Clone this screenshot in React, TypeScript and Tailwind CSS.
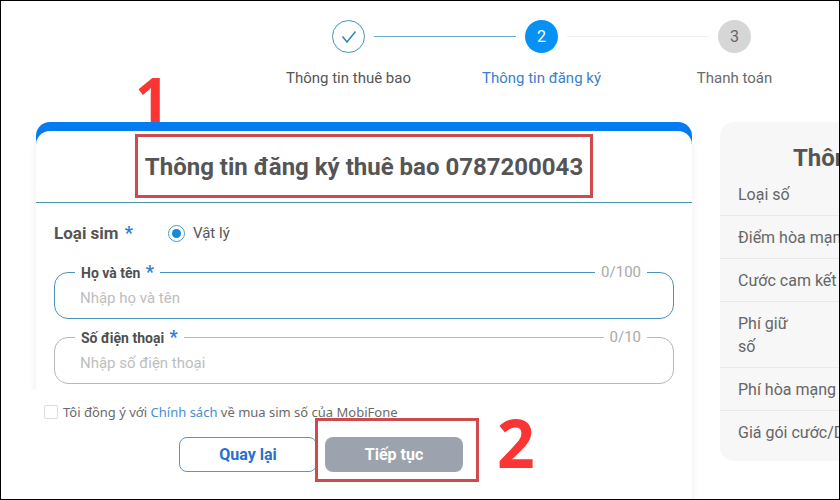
import React from 'react';

interface Step {
  id: number;
  label: string;
  status: 'done' | 'active' | 'pending';
}

const steps: Step[] = [
  { id: 1, label: 'Thông tin thuê bao', status: 'done' },
  { id: 2, label: 'Thông tin đăng ký', status: 'active' },
  { id: 3, label: 'Thanh toán', status: 'pending' },
];

const summaryRows = [
  'Loại số',
  'Điểm hòa mạng',
  'Cước cam kết',
  'Phí giữ số',
  'Phí hòa mạng',
  'Giá gói cước/Data',
];

const circleStyles = {
  done: 'border border-[#3d94b8] bg-white text-[#2f86b8]',
  active: 'bg-[#0791f5] text-white',
  pending: 'bg-[#d6d6d6] text-[#666]',
};

const labelStyles = {
  done: 'text-[#555]',
  active: 'text-[#3c80cc]',
  pending: 'text-[#6a6a6a]',
};

const CheckMark = () => (
  <svg width="16" height="14" viewBox="0 0 16 14" fill="none" stroke="currentColor" strokeWidth="1.5" aria-hidden="true">
    <path d="M1.5 6.5L6 12L14.5 1.5" />
  </svg>
);

const Stepper = () => (
  <ol className="ml-auto mr-2 flex w-[579px] max-w-full pt-[19px]">
    {steps.map((step, i) => (
      <li key={step.id} className="flex flex-1 flex-col items-center">
        <div className="flex w-full items-center">
          <span className={`mr-[9px] h-px flex-1 ${i === 0 ? '' : i === 1 ? 'bg-[#6aa9cb]' : 'bg-[#efefef]'}`} />
          <span className={`flex size-[33px] items-center justify-center rounded-full text-base ${circleStyles[step.status]}`}>
            {step.status === 'done' ? <CheckMark /> : step.id}
          </span>
          <span className={`ml-[9px] h-px flex-1 ${i === 2 ? '' : i === 0 ? 'bg-[#6aa9cb]' : 'bg-[#efefef]'}`} />
        </div>
        <span className={`mt-[15px] text-[15px] leading-5 ${labelStyles[step.status]}`}>{step.label}</span>
      </li>
    ))}
  </ol>
);

const Required = () => <span className="ml-0.5 text-lg leading-5 text-[#2f7fd6]">*</span>;

interface FieldProps {
  id: string;
  label: string;
  placeholder: string;
  counter: string;
  focused?: boolean;
}

const Field = ({ id, label, placeholder, counter, focused = false }: FieldProps) => (
  <div className="relative">
    <label htmlFor={id} className="absolute left-[21px] -top-2.5 bg-white px-1.5 text-sm leading-5 font-bold text-[#4f4f4f]">
      {label} <Required />
    </label>
    <input
      id={id}
      type="text"
      placeholder={placeholder}
      className={`block h-[47px] w-full rounded-[14px] border bg-transparent px-[25px] pt-1 text-[15px] text-[#4f4f4f] outline-none placeholder:text-[#bdbdbd] ${
        focused ? 'border-[#4a94bb]' : 'border-[#b8b8b8]'
      }`}
    />
    <span className="absolute right-[27px] -top-2.5 bg-white px-1.5 text-[15px] leading-5 text-[#a9a9a9]">{counter}</span>
  </div>
);

const RegistrationCard = () => (
  <section className="flex min-w-0 flex-1 flex-col rounded-t-[14px] bg-[#047bf0] pt-[9px] shadow-[0_14px_8px_rgba(0,0,0,0.08)]">
    <div className="flex flex-1 flex-col rounded-t-[14px] bg-white">
      <header className="flex justify-center border-b border-[#4b95a8] pt-[3px] pb-1">
        <h1 className="border-[3px] border-[#cf4a4c] px-[7px] pt-4 pb-3.5 text-2xl leading-7 font-bold whitespace-nowrap text-[#555]">
          Thông tin đăng ký thuê bao 0787200043
        </h1>
      </header>

      <div className="px-[18px] pt-[18px]">
        <div className="flex items-center">
          <span id="sim-type" className="w-[114px] text-[17px] leading-6 font-bold text-[#555]">
            Loại sim <Required />
          </span>
          <label className="flex items-center gap-2 text-[15px] text-[#555]">
            <input
              type="radio"
              name="sim"
              defaultChecked
              aria-describedby="sim-type"
              className="size-[17px] appearance-none rounded-full border border-[#4a9cc0] bg-clip-content p-[3px] checked:bg-[#118ae0]"
            />
            Vật lý
          </label>
        </div>
        <div className="mt-[27px] flex flex-col gap-[18px]">
          <Field id="fullname" label="Họ và tên" placeholder="Nhập họ và tên" counter="0/100" focused />
          <Field id="phone" label="Số điện thoại" placeholder="Nhập số điện thoại" counter="0/10" />
        </div>
      </div>

      <footer className="relative -ml-4 mt-1.5 w-[602px] max-w-full flex-1 bg-white pt-3">
        <div className="flex items-center gap-[5px] pl-6 font-['Noto_Sans',sans-serif] text-[13px] leading-5 text-[#6a6a6a]">
          <input
            id="agree"
            type="checkbox"
            className="size-[14px] appearance-none rounded-[2px] border border-[#dcdcdc] bg-white"
          />
          <label htmlFor="agree">
            Tôi đồng ý với <a href="#policy" className="text-[#4a8cd2]">Chính sách</a> về mua sim số của MobiFone
          </label>
        </div>
        <div className="mt-[15px] flex justify-center gap-2">
          <button type="button" className="h-[35px] w-[138px] rounded-lg border border-[#5596cf] bg-white text-base font-bold text-[#2770cd]">
            Quay lại
          </button>
          <div className="relative">
            <button type="button" className="h-[35px] w-[138px] rounded-lg bg-[#9ca3ae] text-base font-bold text-white">
              Tiếp tục
            </button>
            <span className="pointer-events-none absolute -top-[19px] -right-4 -bottom-2.5 -left-2.5 border-[3px] border-[#cf4a4c]" />
            <Marker className="top-[-28px] left-[172px] text-[66px]">2</Marker>
          </div>
        </div>
      </footer>
    </div>
  </section>
);

const Marker = ({ className, children }: { className: string; children: React.ReactNode }) => (
  <span className={`pointer-events-none absolute font-['Open_Sans',sans-serif] leading-none font-bold text-[#fb3434] ${className}`}>
    {children}
  </span>
);

const SummaryPanel = () => (
  <aside className="w-[119px] shrink-0 self-start overflow-hidden rounded-l-[14px] bg-[#f7f7f7] pb-2">
    <h2 className="pt-6 pb-[3px] pl-[73px] text-2xl leading-6 font-bold whitespace-nowrap text-[#555]">Thông tin</h2>
    <ul className="text-base leading-[23px] text-[#666]">
      {summaryRows.map((row) => (
        <li key={row} className="border-b border-[#e9e9e9] pt-2.5 pb-[9px] pl-[18px] whitespace-nowrap last:border-b-0">
          {row === 'Phí giữ số' ? <span className="block w-14 whitespace-normal">{row}</span> : row}
        </li>
      ))}
    </ul>
  </aside>
);

const App: React.FC = () => (
  <div className="relative flex min-h-screen flex-col overflow-hidden border border-black bg-white font-['Roboto',sans-serif]">
    <Stepper />
    <main className="relative mt-[34px] flex flex-1 gap-7 pl-[35px]">
      <RegistrationCard />
      <SummaryPanel />
      <Marker className="top-[-53px] left-[134px] text-[60px]">1</Marker>
    </main>
  </div>
);

export default App;
